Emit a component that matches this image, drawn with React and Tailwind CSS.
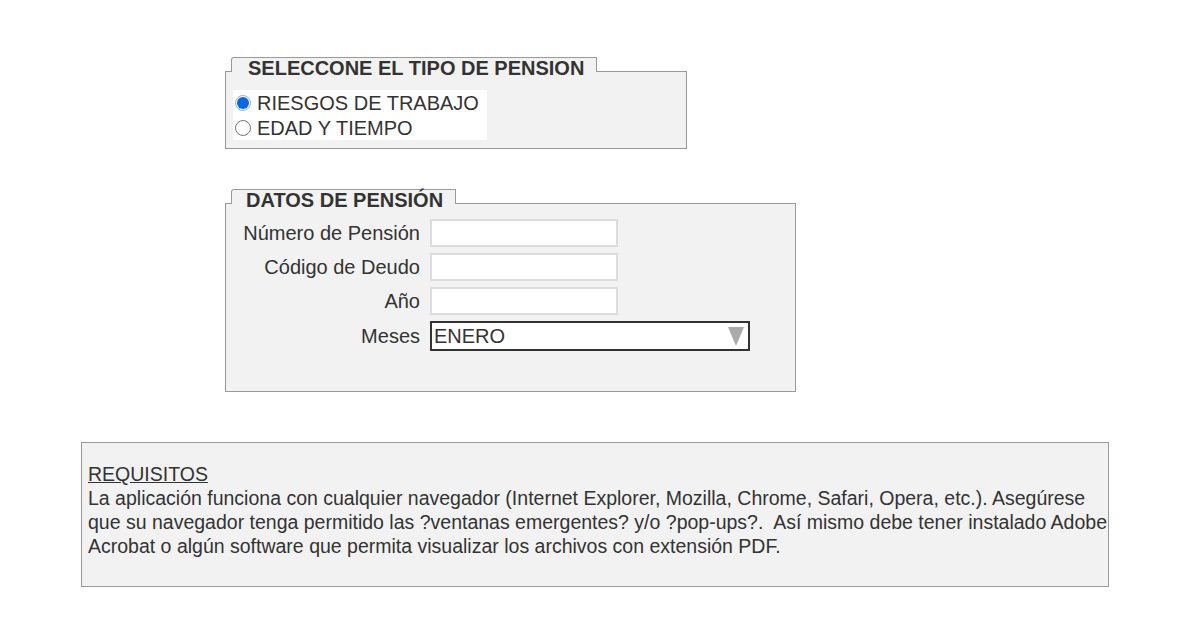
import React from 'react';

const font = { fontFamily: '"Liberation Sans", Arial, sans-serif' };

const Legend = ({ children, className = '' }) => (
  <div className={`-mt-[15px] ml-[5px] h-[15px] w-fit border-t border-x border-[#9a9a9a] bg-[#f2f2f2] rounded-tl-[3px] ${className}`}>
    <div className="-mt-[1px] text-[20px] leading-[23px] font-bold text-[#333]">{children}</div>
  </div>
);

const Radio = ({ checked, label }) => (
  <label className="flex h-[25px] items-center">
    {checked ? (
      <span className="ml-[2px] mr-[6px] flex h-[16px] w-[16px] items-center justify-center rounded-full border border-[#8fb6ee] bg-white">
        <span className="h-[12px] w-[12px] rounded-full bg-[#0b66e4]"></span>
      </span>
    ) : (
      <span className="ml-[2px] mr-[6px] h-[16px] w-[16px] rounded-full border border-[#7a7a7a] bg-white"></span>
    )}
    <span className="text-[20px] leading-[24px] text-[#333]">{label}</span>
  </label>
);

const Field = ({ label, children }) => (
  <>
    <div className="w-[190px] text-right text-[20px] leading-[24px] text-[#333]">{label}</div>
    {children}
  </>
);

const TextInput = () => (
  <input type="text" className="h-[28px] w-[188px] border-2 border-[#dcdcdc] bg-white outline-none" />
);

export default function App() {
  return (
    <div className="min-h-[630px] w-[1200px] bg-white pt-[71px]" style={font}>
      <div className="ml-[225px] w-[462px] h-[78px] border border-[#9a9a9a] bg-[#f2f2f2]">
        <Legend className="pl-[16px] pr-[12px]">SELECCONE EL TIPO DE PENSION</Legend>
        <div className="ml-[7px] mt-[18px] w-[254px] bg-white">
          <Radio checked label="RIESGOS DE TRABAJO" />
          <Radio label="EDAD Y TIEMPO" />
        </div>
      </div>

      <div className="ml-[225px] mt-[54px] w-[571px] h-[189px] border border-[#9a9a9a] bg-[#f2f2f2]">
        <Legend className="pl-[14px] pr-[12px]">DATOS DE PENSIÓN</Legend>
        <div className="mt-[15px] ml-[4px] grid grid-cols-[190px_auto] items-center gap-x-[10px] gap-y-[6px]">
          <Field label="Número de Pensión"><TextInput /></Field>
          <Field label="Código de Deudo"><TextInput /></Field>
          <Field label="Año"><TextInput /></Field>
          <Field label="Meses">
            <div className="flex h-[30px] w-[320px] items-center justify-between border-2 border-[#333] bg-white pl-[2px] pr-[4px]">
              <span className="text-[20px] leading-[24px] text-[#333]">ENERO</span>
              <svg width="16" height="19" viewBox="0 0 16 19">
                <polygon points="0,0 16,0 8,19" fill="#ababab" />
              </svg>
            </div>
          </Field>
        </div>
      </div>

      <div className="ml-[81px] mt-[50px] w-[1028px] h-[145px] border border-[#9a9a9a] bg-[#f2f2f2] pl-[6px] pt-[19px] text-[19.5px] leading-[24px] text-[#333]">
        <div className="underline">REQUISITOS</div>
        <div className="whitespace-nowrap">La aplicación funciona con cualquier navegador (Internet Explorer, Mozilla, Chrome, Safari, Opera, etc.). Asegúrese</div>
        <div className="whitespace-nowrap">que su navegador tenga permitido las ?ventanas emergentes? y/o ?pop-ups?.&nbsp; Así mismo debe tener instalado Adobe</div>
        <div className="whitespace-nowrap">Acrobat o algún software que permita visualizar los archivos con extensión PDF.</div>
      </div>
    </div>
  );
}
